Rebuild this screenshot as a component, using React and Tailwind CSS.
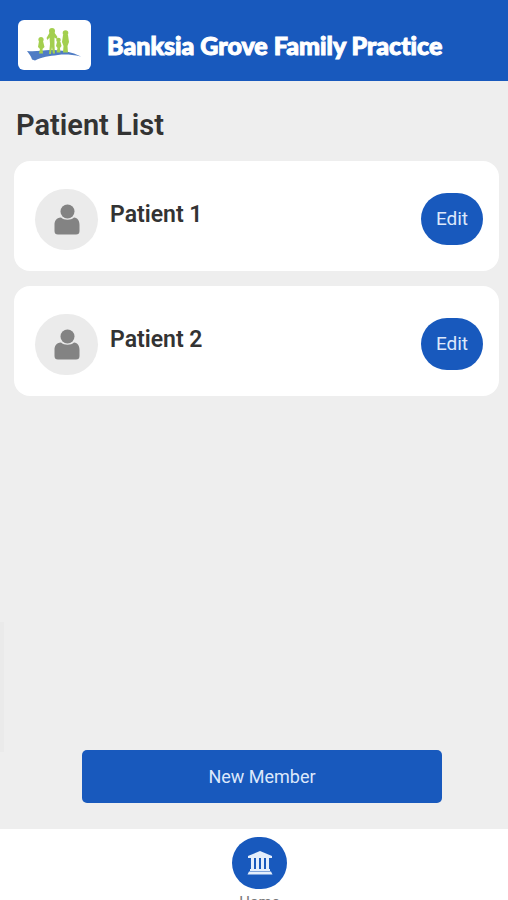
const patients = ['Patient 1', 'Patient 2'];

function Logo() {
  return (
    <svg viewBox="0 0 73 50" className="h-[50px] w-[73px]" role="img" aria-label="Practice logo">
      <path d="M9 31 C18 32 25 30 32 30 C44 30 54 32 63 36.500 C53 34.500 47 34 40 35 C31 36 24 37 17 40.500 L14 39.500 C13 36 11 34 9 31 Z" fill="#4f7cc4" />
      <g fill="#a3cf4e">
        <circle cx="23" cy="19.500" r="2.6" />
        <path d="M21 21 H25 L26.500 27 L24.500 29 L25 33.500 H21 L22 29 L20 27 Z" />
        <circle cx="34" cy="11" r="3" />
        <path d="M32 12 L36 12 L39.500 17 L38.500 19 L36.500 17.500 L36.500 25 L37 33.500 H34.800 L34 27 L33 34 H31 L32 24 L31.500 17.500 L29.500 20 L28.500 18 Z" />
        <circle cx="40.500" cy="20" r="2.300" />
        <path d="M39 22 H42.500 L43.500 26 L42 28 L42.500 32.500 H38.500 L39.500 28 L38 26 Z" />
        <circle cx="47.500" cy="13" r="2.800" />
        <path d="M45 15 H50 L51 22 L49.500 26 L50 32.500 H45 L45.500 26 L44 22 Z" />
      </g>
    </svg>
  );
}

function PersonIcon() {
  return (
    <svg viewBox="0 0 26 31" className="h-[31px] w-[26px]" fill="#838383" aria-hidden="true">
      <circle cx="13.500" cy="7.500" r="7" />
      <path d="M7 13.500 C10 16.500 17 16.500 20 13.500 C24 14 25.500 17 25.500 21 V27 Q25.500 30.500 22 30.500 H4 Q0.500 30.500 0.500 27 V21 C0.500 17 2 14 7 13.500 Z" />
    </svg>
  );
}

function BankIcon() {
  return (
    <svg viewBox="0 0 26 24" className="h-6 w-[26px]" fill="#e4eefc" aria-hidden="true">
      <path d="M13 0 L25 5 V7 H1 V5 Z" />
      <path d="M4 7 H7 V18 H9 V7 H12 V18 H14 V7 H17 V18 H19 V7 H22 V18 H23 V20 H3 V18 H4 Z" />
      <path d="M2 20.500 H24 L25.500 23.500 H0.500 Z" />
    </svg>
  );
}

function PatientCard({ name }) {
  return (
    <li className="flex h-[110px] items-center rounded-2xl bg-white pt-1.5 pr-4 pl-[21px]">
      <span className="flex h-[61px] w-[63px] items-center justify-center rounded-full bg-[#ebebeb]">
        <PersonIcon />
      </span>
      <h2 className="ml-3 flex-1 pb-2 text-[23px] leading-7 font-semibold text-[#333]">{name}</h2>
      <button type="button" aria-label={`Edit ${name}`} className="h-[52px] w-[62px] rounded-full bg-[#1859bd] text-[19px] text-[#dce8fb]">
        Edit
      </button>
    </li>
  );
}

export default function App() {
  return (
    <div className="relative flex h-screen flex-col overflow-hidden bg-[#eee] font-['Roboto',sans-serif]">
      <header className="flex h-[81px] shrink-0 items-center gap-4 bg-[#1859bd] px-[18px] pt-2">
        <span className="shrink-0 rounded-md bg-white">
          <Logo />
        </span>
        <span className="text-[25px] leading-8 font-black whitespace-nowrap text-white [font-variant-ligatures:none] [-webkit-text-stroke:1px_white] font-['Lato',sans-serif]">
          Banksia Grove Family Practice
        </span>
      </header>

      <main className="flex flex-1 flex-col pr-[9px] pl-[14px]">
        <h1 className="mt-6 pl-0.5 text-[29px] leading-10 font-semibold text-[#333]">Patient List</h1>
        <ul className="mt-4 flex flex-col gap-[15px]">
          {patients.map((name) => (
            <PatientCard key={name} name={name} />
          ))}
        </ul>
        <div className="mt-auto flex justify-center pb-[26px] pl-[11px]">
          <button type="button" className="h-[53px] w-[76%] rounded-[5px] bg-[#1859bd] text-[18px] text-[#dce8fb]">
            New Member
          </button>
        </div>
      </main>

      <nav className="flex h-[71px] shrink-0 justify-center overflow-hidden bg-white pt-2 pl-[11px]">
        <a href="#home" className="flex flex-col items-center text-[15px] leading-5 text-[#777]">
          <span className="flex h-[52px] w-[55px] shrink-0 items-center justify-center rounded-full bg-[#1859bd]">
            <BankIcon />
          </span>
          <span className="mt-[3px] shrink-0">Home</span>
        </a>
      </nav>

      <div className="absolute bottom-[148px] left-0 h-[130px] w-1 bg-[#eaeaea]" />
    </div>
  );
}
